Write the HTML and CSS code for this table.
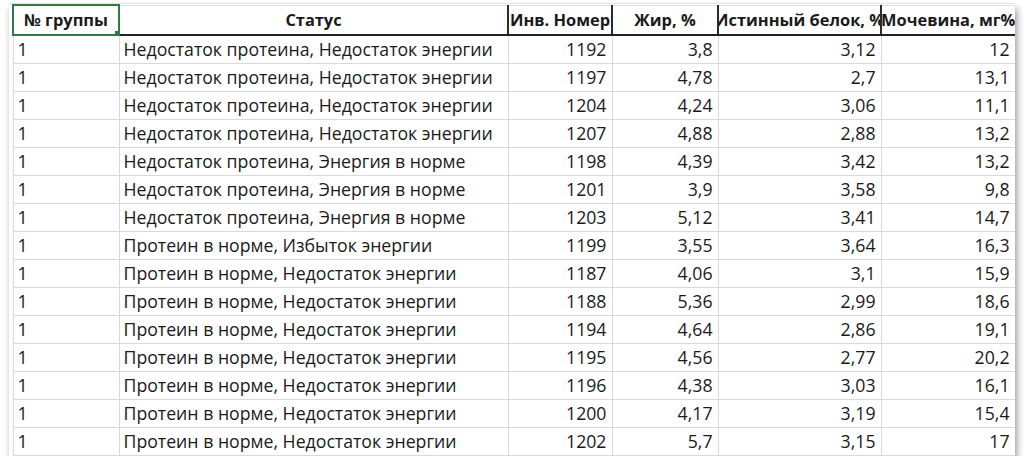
FILE: index.html
```html
<!DOCTYPE html>
<html lang="ru">
<head>
<meta charset="utf-8">
<title>Таблица</title>
<link rel="stylesheet" href="styles.css">
</head>
<body>
<div class="sheet">
<table class="grid">
<colgroup>
<col class="c1"><col class="c2"><col class="c3"><col class="c4"><col class="c5"><col class="c6">
</colgroup>
<thead>
<tr>
<th class="sel"><span class="hc">№ группы</span><span class="handle"></span></th>
<th class="hd"><span class="hc">Статус</span></th>
<th class="hd"><span class="hc">Инв. Номер</span></th>
<th class="hd"><span class="hc">Жир, %</span></th>
<th class="hd"><span class="hc">Истинный белок, %</span></th>
<th class="hd last"><span class="hc">Мочевина, мг%</span></th>
</tr>
</thead>
<tbody>
<tr><td>1</td><td>Недостаток протеина, Недостаток энергии</td><td class="n">1192</td><td class="n">3,8</td><td class="n">3,12</td><td class="n">12</td></tr>
<tr><td>1</td><td>Недостаток протеина, Недостаток энергии</td><td class="n">1197</td><td class="n">4,78</td><td class="n">2,7</td><td class="n">13,1</td></tr>
<tr><td>1</td><td>Недостаток протеина, Недостаток энергии</td><td class="n">1204</td><td class="n">4,24</td><td class="n">3,06</td><td class="n">11,1</td></tr>
<tr><td>1</td><td>Недостаток протеина, Недостаток энергии</td><td class="n">1207</td><td class="n">4,88</td><td class="n">2,88</td><td class="n">13,2</td></tr>
<tr><td>1</td><td>Недостаток протеина, Энергия в норме</td><td class="n">1198</td><td class="n">4,39</td><td class="n">3,42</td><td class="n">13,2</td></tr>
<tr><td>1</td><td>Недостаток протеина, Энергия в норме</td><td class="n">1201</td><td class="n">3,9</td><td class="n">3,58</td><td class="n">9,8</td></tr>
<tr><td>1</td><td>Недостаток протеина, Энергия в норме</td><td class="n">1203</td><td class="n">5,12</td><td class="n">3,41</td><td class="n">14,7</td></tr>
<tr><td>1</td><td>Протеин в норме, Избыток энергии</td><td class="n">1199</td><td class="n">3,55</td><td class="n">3,64</td><td class="n">16,3</td></tr>
<tr><td>1</td><td>Протеин в норме, Недостаток энергии</td><td class="n">1187</td><td class="n">4,06</td><td class="n">3,1</td><td class="n">15,9</td></tr>
<tr><td>1</td><td>Протеин в норме, Недостаток энергии</td><td class="n">1188</td><td class="n">5,36</td><td class="n">2,99</td><td class="n">18,6</td></tr>
<tr><td>1</td><td>Протеин в норме, Недостаток энергии</td><td class="n">1194</td><td class="n">4,64</td><td class="n">2,86</td><td class="n">19,1</td></tr>
<tr><td>1</td><td>Протеин в норме, Недостаток энергии</td><td class="n">1195</td><td class="n">4,56</td><td class="n">2,77</td><td class="n">20,2</td></tr>
<tr><td>1</td><td>Протеин в норме, Недостаток энергии</td><td class="n">1196</td><td class="n">4,38</td><td class="n">3,03</td><td class="n">16,1</td></tr>
<tr><td>1</td><td>Протеин в норме, Недостаток энергии</td><td class="n">1200</td><td class="n">4,17</td><td class="n">3,19</td><td class="n">15,4</td></tr>
<tr><td>1</td><td>Протеин в норме, Недостаток энергии</td><td class="n">1202</td><td class="n">5,7</td><td class="n">3,15</td><td class="n">17</td></tr>
</tbody>
</table>
</div>
</body>
</html>
```

FILE: styles.css
```css
html, body {
  margin: 0;
  padding: 0;
  background: #ffffff;
}
body {
  padding: 3px 0 0 9px;
  font-family: "Open Sans", "Liberation Sans", sans-serif;
  color: #1a1a1a;
}
.sheet {
  width: 1006px;
  height: 453px;
  background: #ffffff;
  box-shadow: 2px 5px 7px rgba(0, 0, 0, 0.4);
  border-top: 1px solid #e4e4e4;
  padding-left: 3px;
  box-sizing: border-box;
  overflow: hidden;
}
.grid {
  border-collapse: collapse;
  table-layout: fixed;
  width: 1002px;
  font-size: 17.7px;
}
.c1 { width: 106px; }
.c2 { width: 389px; }
.c3 { width: 104px; }
.c4 { width: 106px; }
.c5 { width: 163px; }
.c6 { width: 134px; }
th, td {
  padding: 0 4px;
  white-space: nowrap;
  overflow: hidden;
  border: 1px solid #d9d9d9;
  line-height: 27px;
  height: 28px;
  box-sizing: border-box;
}
td {
  text-align: left;
}
td.n {
  text-align: right;
  padding-right: 5px;
}
tbody tr:first-child td {
  border-top: none;
}
thead tr {
  height: 30px;
}
th {
  height: 30px;
  padding: 0;
  font-weight: 700;
  font-size: 16.4px;
  border-top: 1px solid #e0e0e0;
  border-bottom: 2px solid #222222;
  position: relative;
  line-height: 28px;
}
th.hd {
  border-left: 2px solid #2b2b2b;
}
th.last {
  border-right: 1px solid #d9d9d9;
}
.hc {
  display: flex;
  justify-content: center;
  overflow: hidden;
  white-space: nowrap;
}
th.sel {
  border: 2px solid #2f7a45;
  border-bottom: 2px solid #2f7a45;
}
.handle {
  position: absolute;
  right: -4px;
  bottom: -4px;
  width: 6px;
  height: 6px;
  background: #2f7a45;
  border: 1px solid #ffffff;
  z-index: 2;
}
```
